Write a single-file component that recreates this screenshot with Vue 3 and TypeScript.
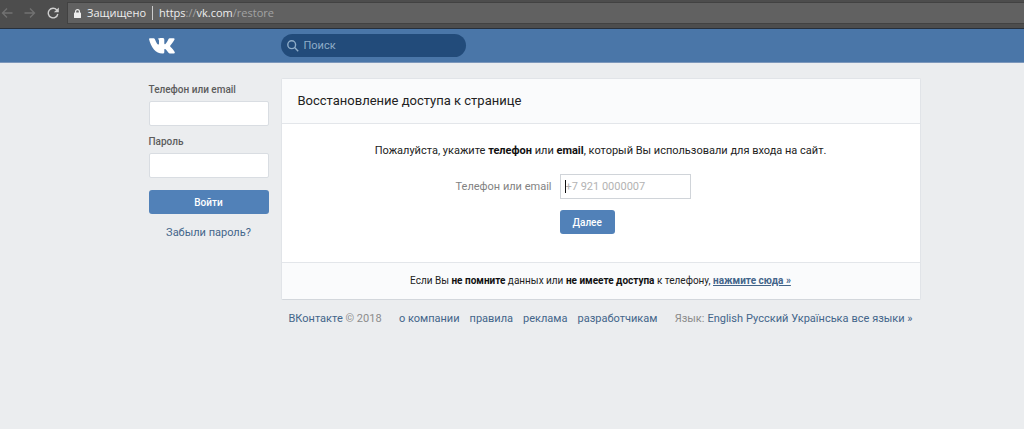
<script setup lang="ts">
import { ref } from 'vue'

const login = ref('')
const password = ref('')
const account = ref('')
const query = ref('')

const siteLinks: string[] = ['о компании', 'правила', 'реклама', 'разработчикам']
const languages: string[] = ['English', 'Русский', 'Українська', 'все языки »']
</script>

<template>
  <div class="page">
    <div class="browser">
      <button class="nav" type="button" aria-label="Назад">
        <svg width="12" height="12" viewBox="0 0 12 12"><path d="M11.500 6H1.500M6 1.500L1.500 6L6 10.500" /></svg>
      </button>
      <button class="nav" type="button" aria-label="Вперёд">
        <svg width="12" height="12" viewBox="0 0 12 12"><path d="M.5 6H10.500M6 1.500L10.500 6L6 10.500" /></svg>
      </button>
      <button class="nav reload" type="button" aria-label="Обновить">
        <svg width="12" height="12" viewBox="0 0 12 12">
          <path d="M9.800 3A4.800 4.800 0 1 0 10.800 7" />
          <path class="solid" d="M11.800 .4V5.300H6.900Z" />
        </svg>
      </button>
      <div class="address">
        <svg class="lock" width="7" height="9" viewBox="0 0 7 9">
          <rect y="3.600" width="7" height="5.400" rx=".6" />
          <path d="M1.600 4V2.500A1.900 1.900 0 0 1 5.400 2.500V4" />
        </svg>
        <span class="secure">Защищено</span>
        <span class="url">https<i>://</i>vk.com<i>/restore</i></span>
      </div>
    </div>

    <header class="topbar">
      <div class="wrap">
        <a class="logo" href="#" aria-label="ВКонтакте">
          <svg width="26" height="16" viewBox="0 0 26 16">
            <path d="M0 1Q0 .3 1 .3H4.600Q5.500 .3 5.900 1.300C7 4.200 8.400 6.600 9.300 6.600C9.800 6.600 10 6.200 10 5.200V2.800C10 1.500 9.400 1.100 8.700 .8C9.500 .1 11 0 12.600 0C14.600 0 15.300 .2 15.300 1.700V5.600C15.300 6.400 15.900 6.500 16.400 6C17.600 4.800 18.700 2.800 19.400 1.200Q19.800 .3 20.800 .3H24.600Q26 .3 25.400 1.700C24.700 3.300 22.800 5.800 21.500 7.300C21 8 21 8.300 21.600 9C22.900 10.300 24.900 12.300 25.700 13.900Q26.200 15.400 24.700 15.400H20.900Q20 15.400 19.300 14.500C18.300 13.300 17.200 11.700 16.100 11.100C15.600 10.900 15.300 11.100 15.300 11.800V14.200Q15.300 15.500 13.900 15.500C7 15.800 2 9.700 0 1Z" />
          </svg>
        </a>
        <label class="search">
          <svg width="12" height="12" viewBox="0 0 12 12"><circle cx="4.700" cy="4.700" r="3.900" /><path d="M7.600 7.600L11.200 11.200" /></svg>
          <input v-model="query" type="search" placeholder="Поиск" aria-label="Поиск" />
        </label>
      </div>
    </header>

    <div class="wrap body">
      <form class="login" @submit.prevent>
        <label for="login">Телефон или email</label>
        <input id="login" v-model="login" type="text" />
        <label for="password">Пароль</label>
        <input id="password" v-model="password" type="password" />
        <button class="primary" type="submit">Войти</button>
        <a href="#">Забыли пароль?</a>
      </form>

      <div class="content">
        <main class="card">
          <h1>Восстановление доступа к странице</h1>
          <form class="restore" @submit.prevent>
            <p>Пожалуйста, укажите <b>телефон</b> или <b>email</b>, который Вы использовали для входа на сайт.</p>
            <div class="fields">
              <label for="account">Телефон или email</label>
              <div class="field">
                <input id="account" v-model="account" type="text" placeholder="+7 921 0000007" />
              </div>
              <button class="primary" type="submit">Далее</button>
            </div>
          </form>
          <p class="hint">Если Вы <b>не помните</b> данных или <b>не имеете доступа</b> к телефону, <a href="#">нажмите сюда »</a></p>
        </main>
        <footer class="footer">
          <span><a href="#">ВКонтакте</a> © 2018</span>
          <nav class="links"><a v-for="link in siteLinks" :key="link" href="#">{{ link }}</a></nav>
          <div class="langs">Язык: <a v-for="lang in languages" :key="lang" href="#">{{ lang }}</a></div>
        </footer>
      </div>
    </div>
  </div>
</template>

<style>
body {
  background: #ebedef;
}
</style>

<style scoped>
.page {
  font-family: Roboto, "Open Sans", sans-serif;
  font-size: 11px;
  line-height: 14px;
  color: #222;
}
.page * {
  box-sizing: border-box;
}
input,
button {
  font: inherit;
  margin: 0;
  outline: none;
}
a {
  color: #43658a;
  text-decoration: none;
}
b {
  font-weight: 700;
  color: #111;
}
svg {
  display: block;
  flex: none;
}
.browser {
  display: flex;
  align-items: center;
  gap: 11px;
  height: 29px;
  padding: 2px 0 4px 1px;
  background: #4d4d4d;
  border-bottom: 1px solid #27303c;
}
.nav {
  padding: 0;
  border: 0;
  background: none;
  color: #717171;
}
.nav path {
  fill: none;
  stroke: currentColor;
  stroke-width: 1.4;
}
.nav .solid {
  fill: currentColor;
  stroke: none;
}
.reload {
  color: #cfcfcf;
}
.address {
  flex: 1;
  display: flex;
  align-items: center;
  align-self: stretch;
  margin-left: -3px;
  padding-left: 6px;
  background: #616161;
  border: 1px solid #424242;
  border-right: 0;
  color: #eee;
  font-family: "Open Sans", "Noto Sans", sans-serif;
}
.lock rect {
  fill: #eee;
}
.lock path {
  fill: none;
  stroke: #eee;
  stroke-width: 1.2;
}
.secure {
  margin-left: 6px;
  padding-right: 6px;
  border-right: 1px solid #ccc;
}
.url {
  padding-left: 6px;
}
.url i {
  font-style: normal;
  color: #a3a3a3;
}
.topbar {
  height: 34px;
  background: #4a76a8;
  border-bottom: 1px solid #7c97bb;
}
.wrap {
  display: flex;
  gap: 12px;
  max-width: 817px;
  margin: 0 auto;
  padding-left: 45px;
}
.topbar .wrap {
  align-items: center;
  height: 33px;
}
.logo {
  width: 120px;
}
.logo path {
  fill: #fff;
}
.search {
  display: flex;
  align-items: center;
  gap: 5px;
  width: 185px;
  height: 23px;
  padding: 0 6px;
  border-radius: 12px;
  background: #224b7a;
}
.search svg {
  fill: none;
  stroke: #8fadc8;
  stroke-width: 1.400;
}
.search input {
  flex: 1;
  min-width: 0;
  padding: 0;
  border: 0;
  background: none;
  color: #fff;
}
.search input::placeholder {
  color: #8fadc8;
  opacity: 1;
}
.body {
  padding-top: 15px;
}
.login {
  display: flex;
  flex-direction: column;
  width: 120px;
  padding-top: 5px;
}
.login label {
  margin-bottom: 4px;
  color: #5c5c5c;
  font-size: 10px;
  font-weight: 500;
}
.login input {
  height: 25px;
  margin-bottom: 9px;
  padding: 0 6px;
  border: 1px solid #d9dde2;
  border-radius: 2px;
  background: #fff;
}
.primary {
  height: 24px;
  padding: 1px 13px 0;
  border: 0;
  border-radius: 3px;
  background: #5181b8;
  color: #fff;
  font-size: 10px;
  font-weight: 500;
}
.login .primary {
  margin-top: 3px;
}
.login a {
  margin-top: 12px;
  text-align: center;
}
.content {
  flex: 1;
}
.card {
  background: #fff;
  border: 1px solid #e1e4e8;
  border-bottom-color: #d3d7dc;
  border-radius: 2px;
}
h1 {
  margin: 0;
  padding: 12px 16px;
  background: #fafbfc;
  border-bottom: 1px solid #e3e6ea;
  font-size: 13px;
  line-height: 20px;
  font-weight: 400;
}
.restore {
  padding: 20px 0 28px;
}
p {
  margin: 0;
  text-align: center;
}
.fields {
  display: grid;
  grid-template-columns: 270px 131px;
  gap: 11px 8px;
  align-items: center;
  margin-top: 16px;
}
.fields label {
  text-align: right;
  color: #828282;
}
.field {
  position: relative;
}
.field::before {
  content: "";
  position: absolute;
  left: 5px;
  top: 6px;
  width: 1px;
  height: 13px;
  background: #111;
}
.field input {
  width: 100%;
  height: 25px;
  display: block;
  padding: 0 5px;
  border: 1px solid #d0d4d9;
  background: #fff;
}
.field input::placeholder {
  color: #b3b3b3;
  opacity: 1;
}
.fields .primary {
  grid-column: 2;
  justify-self: start;
}
.hint {
  padding: 11px 0;
  background: #fafbfc;
  border-top: 1px solid #e3e6ea;
  font-size: 10px;
}
.hint a {
  font-weight: 700;
  text-decoration: underline;
}
.footer {
  display: flex;
  justify-content: space-between;
  padding: 12px 8px;
  color: #8c8c8c;
}
.links {
  display: flex;
  gap: 10px;
}
.langs {
  display: flex;
  gap: 3px;
}
</style>
